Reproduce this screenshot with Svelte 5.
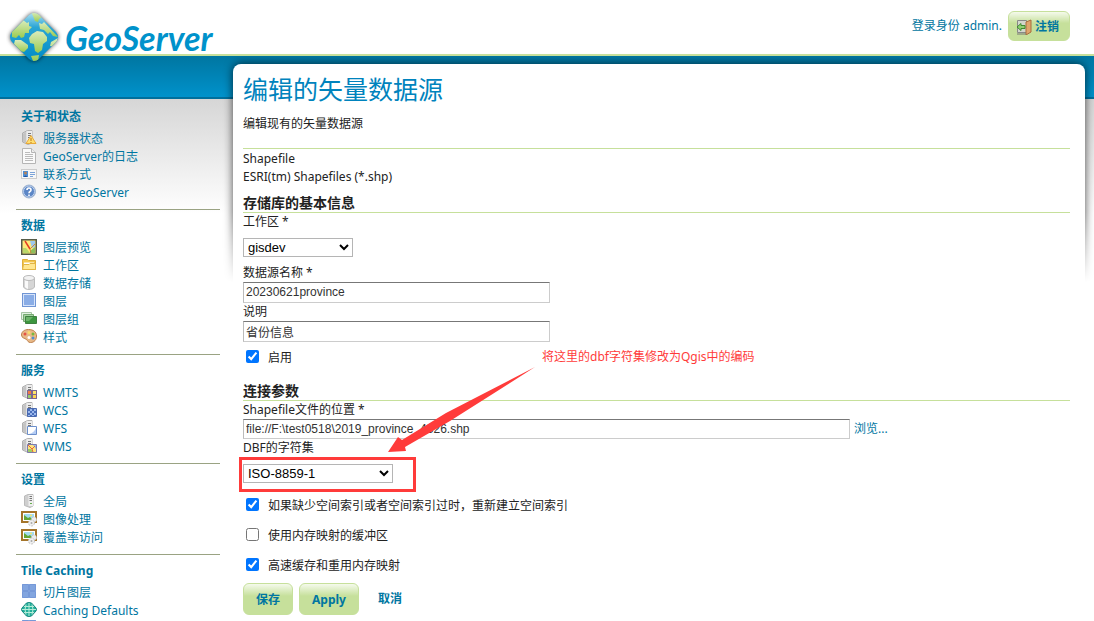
<script lang="ts">
	type Item = { icon: string; label: string };

	const sections: { title: string; items: Item[] }[] = [
		{
			title: '关于和状态',
			items: [
				{ icon: 'status', label: '服务器状态' },
				{ icon: 'log', label: 'GeoServer的日志' },
				{ icon: 'contact', label: '联系方式' },
				{ icon: 'help', label: '关于 GeoServer' }
			]
		},
		{
			title: '数据',
			items: [
				{ icon: 'preview', label: '图层预览' },
				{ icon: 'folder', label: '工作区' },
				{ icon: 'database', label: '数据存储' },
				{ icon: 'layer', label: '图层' },
				{ icon: 'layers', label: '图层组' },
				{ icon: 'palette', label: '样式' }
			]
		},
		{
			title: '服务',
			items: [
				{ icon: 'wmts', label: 'WMTS' },
				{ icon: 'wcs', label: 'WCS' },
				{ icon: 'wfs', label: 'WFS' },
				{ icon: 'wms', label: 'WMS' }
			]
		},
		{
			title: '设置',
			items: [
				{ icon: 'server', label: '全局' },
				{ icon: 'image', label: '图像处理' },
				{ icon: 'image', label: '覆盖率访问' }
			]
		},
		{
			title: 'Tile Caching',
			items: [
				{ icon: 'tiles', label: '切片图层' },
				{ icon: 'globe', label: 'Caching Defaults' },
				{ icon: 'tiles', label: '' }
			]
		}
	];

	let workspace = $state('gisdev');
	let storeName = $state('20230621province');
	let description = $state('省份信息');
	let enabled = $state(true);
	let location = $state('file://F:\\test0518\\2019_province_4326.shp');
	let charset = $state('ISO-8859-1');
	let spatialIndex = $state(true);
	let memoryMapped = $state(false);
	let cacheMaps = $state(true);
</script>

{#snippet tower()}
	<path d="M1.500 3 6.500.5H11v12.500L7 14.500 1.500 12z" fill="#d4d4d4" stroke="#b0b0b0" />
	<path d="M5.500 1H11v12H5.500z" fill="#ececec" />
	<path d="M7 3.500h3m-3 2h3m-3 2h3" stroke="#777" />
	<path d="M2 4 5 2v11l-3-1.500z" fill="#c4c4c4" />
{/snippet}

{#snippet icon(name: string)}
	<svg class="icon" viewBox="0 0 16 16" aria-hidden="true">
		{#if name === 'status'}
			{@render tower()}
			<path d="M10 5.500 15 13.500H5z" fill="#ffdf70" stroke="#e8a93a" stroke-linejoin="round" />
			<path d="M10 8v3m0 1v1" stroke="#b8751a" />
		{:else if name === 'log'}
			<path d="M1.500.5h9l4 4v11h-13z" fill="#fafafa" stroke="#b5b5b5" />
			<path d="M10.500.5v4h4" fill="#eee" stroke="#b5b5b5" />
			<path d="M4 4.500h5M4 6.500h8M4 8.500h8M4 10.500h8M4 12.500h8" stroke="#bbb" />
		{:else if name === 'contact'}
			<rect x=".5" y="3.500" width="15" height="9" fill="#f7f7f7" stroke="#ccc" />
			<rect x="2" y="5" width="5" height="6" fill="#4b8fd8" />
			<circle cx="4.500" cy="7" r="1.500" fill="#b5825a" />
			<path d="M2.500 11q2-3 4 0z" fill="#254f98" />
			<path d="M9 6.500h5m-5 2h5m-5 2h3" stroke="#7ba3d8" />
		{:else if name === 'help'}
			<circle cx="8" cy="7.500" r="6.500" fill="#5b86c6" stroke="#a3b6d0" />
			<circle cx="8" cy="7.500" r="5.500" fill="none" stroke="#bfd2ed" />
			<path d="M6 6q0-2 2-2t2 2q0 1-1 1.500T8 9.200M8 10.500v1.500" fill="none" stroke="#fff" stroke-width="1.600" />
		{:else if name === 'preview'}
			<rect x=".75" y=".75" width="14.500" height="14.500" fill="#ffe97a" stroke="#555b48" stroke-width="1.500" />
			<path d="M9 2h5v6l-3 1z" fill="#9cc8ee" />
			<path d="M2 9h3l4 5H2z" fill="#b9d86a" />
			<path d="m9 12 5-4v6H9z" fill="#8cc05c" />
			<path d="m4 2 5 8" fill="none" stroke="#e33c22" stroke-width="1.500" />
			<path d="m9 10 5-5M9 10l1 4" fill="none" stroke="#d08a3a" />
		{:else if name === 'folder'}
			<path d="M1.500 12.500v-10h5l1 1h7v9z" fill="#f3c84e" stroke="#dfae3c" />
			<path d="M3 5.500h10v2H3z" fill="#fff" />
			<path d="m1.500 12.500 1-5H8l1-1h5.500v6z" fill="#ffe791" stroke="#e2b544" />
		{:else if name === 'database'}
			<path d="M2.500 3v9q1 2.500 5.500 2.500t5.500-2.500V3z" fill="#d6d6d6" stroke="#bbb" />
			<path d="M4 5v7q1 1.500 3 2V6z" fill="#fafafa" />
			<ellipse cx="8" cy="3" rx="5.500" ry="2.500" fill="#f2f2f2" stroke="#bbb" />
		{:else if name === 'layer'}
			<rect x="1" y="0" width="14" height="14" fill="#7095d4" />
			<rect x="2.500" y="1.500" width="11" height="11" fill="#8aadE6" stroke="#d7e4fa" />
		{:else if name === 'layers'}
			<path d="M.5 1.500h10v7H.5z" fill="#e3f2e2" stroke="#a5c4a3" />
			<path d="M2.500 3.500h10v7h-10z" fill="#a6d3a2" stroke="#74a870" />
			<path d="M4.500 5.500h11v7h-11z" fill="#3c963f" stroke="#3f8041" />
			<path d="M5 6h7l-4 4H5z" fill="#6cb369" />
		{:else if name === 'palette'}
			<path d="M7.500.5C3 .5.500 3 .5 6s3 3 5 4.500c1.500 1.500 1.500 3 4 3 4 0 6-3 6-6.500 0-4-3-6.500-8-6.500z" fill="#e8b987" stroke="#bd7f4c" />
			<circle cx="4" cy="5" r="1.500" fill="#e65345" />
			<circle cx="8" cy="3.500" r="1.500" fill="#f9dc6a" />
			<circle cx="12" cy="5" r="1.500" fill="#77b93e" />
			<circle cx="12" cy="9" r="1.500" fill="#538dd0" />
			<circle cx="8" cy="8.500" r="1.500" fill="#fff" />
		{:else if name === 'wmts'}
			{@render tower()}
			<path d="M6 6h10v9H6z" fill="#7d6790" />
			<path d="M7 7h3v3H7z" fill="#f27946" /><path d="M12 7h3v3h-3z" fill="#ffe568" />
			<path d="M7 11h3v3H7z" fill="#95cb6a" /><path d="M12 11h3v3h-3z" fill="#ffd24d" />
		{:else if name === 'wcs'}
			{@render tower()}
			<path d="M6.500 6.500h9v8h-9z" fill="#9cb8ec" stroke="#4a69af" />
			<path d="M7 7h2v2h2V7h2v2h2v2h-2v2h2v1h-2v-1h-2v1H9v-1H7v-2h2V9H7zm4 2v2H9v2h2v-2h2V9z" fill="#4a6fbb" />
		{:else if name === 'wfs'}
			{@render tower()}
			<path d="M6.500 6.500h9v8h-9z" fill="#fff" stroke="#6c8fcb" />
			<path d="M15 8v6H8q5-1 7-6z" fill="#b5cdf4" />
		{:else if name === 'wms'}
			{@render tower()}
			<path d="M6.500 6.500h9v8h-9z" fill="#ffe67c" stroke="#807bac" />
			<path d="M12 7h3v4z" fill="#93bbe8" /><path d="M7 11h3l2 3H7z" fill="#9ccc66" />
			<path d="m7 7 4 4 1 3m-1-3 3-3" fill="none" stroke="#e8643a" />
		{:else if name === 'server'}
			<path d="M3.500 3 7 1.500h5V13l-3 1.500-5.500-2z" fill="#cfcfcf" stroke="#bbb" />
			<path d="M7.500 2H12v11H7.500z" fill="#efefef" />
			<path d="M8.500 3.500H11m-2.500 2H11m-2.500 2H11" stroke="#777" />
			<path d="M9 10h2v1H9z" fill="#66b24c" />
		{:else if name === 'image'}
			<path d="M1 1h14v10H1z" fill="#fff" stroke="#a5752a" stroke-width="2" />
			<path d="M3 3h10v6H3z" fill="#a2dcf0" />
			<path d="m3 9 0-5 4 3 2-1 3 3z" fill="#64a635" />
			<circle cx="10" cy="4.500" r="1" fill="#ffe667" />
			<circle cx="13" cy="8.500" r="2.500" fill="#ececec" stroke="#c2c2c2" stroke-dasharray="2 1" />
			<circle cx="10.500" cy="12" r="3" fill="#efefef" stroke="#c2c2c2" stroke-dasharray="2 1" />
			<circle cx="10.500" cy="12" r="1" fill="#aaa" />
		{:else if name === 'tiles'}
			<path d="M1 0h14v14H1z" fill="#a5c0ee" />
			<path d="M1.500.5h6v6h-6zm7 0h6v6h-6zm-7 7h6v6h-6zm7 0h6v6h-6z" fill="#82a5df" stroke="#7699d8" />
		{:else if name === 'globe'}
			<path d="M8 .5 10.500 1 15 6l.5 1.500L15 9l-4.500 5-2.500.500L5.500 14 1 9 .5 7.500 1 6l4.500-5z" fill="#23ae9a" stroke="#16877f" stroke-linejoin="round" />
			<path d="M8 1v13M1 7.500h14M3 4.500h10M3 10.500h10M5 2.500q-2 5 0 10M11 2.500q2 5 0 10" fill="none" stroke="#b5ecd8" />
		{/if}
	</svg>
{/snippet}

<div class="page">
	<header class="header">
		<a class="logo" href="/geoserver/web" aria-label="GeoServer">
			<svg class="logo-mark" viewBox="0 0 56 56" aria-hidden="true">
				<defs>
					<linearGradient id="sea" x1="0" y1="0" x2="0" y2="1">
						<stop offset="0" stop-color="#a8def0" />
						<stop offset=".3" stop-color="#2aa5d5" />
						<stop offset="1" stop-color="#008bc6" />
					</linearGradient>
					<linearGradient id="land" x1="0" y1="0" x2="0" y2="1">
						<stop offset="0" stop-color="#d9ecbd" />
						<stop offset="1" stop-color="#9ccb4f" />
					</linearGradient>
					<clipPath id="diamond">
						<path d="M23 6q5-4 10 0l17 17q4 5 0 10L33 50q-5 4-10 0L6 33q-4-5 0-10z" />
					</clipPath>
				</defs>
				<path class="logo-shape" d="M23 6q5-4 10 0l17 17q4 5 0 10L33 50q-5 4-10 0L6 33q-4-5 0-10z" fill="url(#sea)" />
				<g clip-path="url(#diamond)" fill="url(#land)">
					<path d="M6 22 17 11l4 3 2-1 0 4 3 1-3 3 0 3-4 0-1 4-3 1-2-3-3 3-4-1z" />
					<path d="m9 31 6 0 7 5 0 3-4 4-4-1-6-7z" />
					<path d="m25 3 8 0 3 5-3 2-1 3-3-1-2-5z" />
					<path d="m33 14 3 1 2-2 14 15-5-1-3-4-2 2-4-4-4-1z" />
					<path d="m26 25 5-3 6 1 4 5 0 4-4 3-1 6-4 3-3-2-1-7-4-1-1-5z" />
					<path d="m45 33 7-4-3 9-5-1zM25 47l8-1-1 6-5 0z" />
				</g>
			</svg>
			<span class="logo-text">GeoServer</span>
		</a>
		<div class="login">
			<span>登录身份 admin.</span>
			<button class="btn logout" type="button">
				<svg class="icon" viewBox="0 0 16 16" aria-hidden="true">
					<path d="M1.500 1.500h9v12h-9z" fill="#d2d6cc" stroke="#888" />
					<path d="m10 3 5-2v12l-5 3z" fill="#dfa56c" stroke="#a86c3c" />
					<path d="M1 8 5 4.500v2h4v3H5v2z" fill="#8fcf74" stroke="#3f8a30" />
					<path d="M1 15h9" stroke="#777" />
				</svg>
				注销
			</button>
		</div>
	</header>

	<div class="body">
		<nav class="sidebar">
			{#each sections as section}
				<section class="group">
					<h3>{section.title}</h3>
					<ul>
						{#each section.items as item}
							<li>
								<a href="#{item.icon}">
									{@render icon(item.icon)}
									<span>{item.label}</span>
								</a>
							</li>
						{/each}
					</ul>
				</section>
			{/each}
		</nav>

		<main class="main">
			<div class="shadow"></div>
			<div class="content">
				<h1>编辑的矢量数据源</h1>
				<p class="lead">编辑现有的矢量数据源</p>

				<form onsubmit={(e) => e.preventDefault()}>
					<div class="type">
						<div>Shapefile</div>
						<div>ESRI(tm) Shapefiles (*.shp)</div>
					</div>

					<h2>存储库的基本信息</h2>
					<label for="workspace">工作区 *</label>
					<select id="workspace" class="workspace" bind:value={workspace}>
						<option>gisdev</option>
					</select>
					<label for="name">数据源名称 *</label>
					<input id="name" class="text" type="text" bind:value={storeName} />
					<label for="description">说明</label>
					<input id="description" class="text" type="text" bind:value={description} />
					<label class="check"><input type="checkbox" bind:checked={enabled} /><span>启用</span></label>

					<h2 class="params">连接参数</h2>
					<label for="location">Shapefile文件的位置 *</label>
					<div class="file-row">
						<input id="location" class="text" type="text" bind:value={location} />
						<a href="#browse">浏览...</a>
					</div>
					<label for="charset">DBF的字符集</label>
					<div class="marked">
						<select id="charset" class="charset" bind:value={charset}>
							<option>ISO-8859-1</option>
						</select>
						<div class="mark-box"></div>
						<svg class="mark-arrow" viewBox="0 0 148 88" aria-hidden="true">
							<path d="M147 0 62 54 17 80l1 4-18 1 10-15 4 3L58 46z" fill="#ff3b3a" />
						</svg>
						<div class="mark-note">将这里的dbf字符集修改为Qgis中的编码</div>
					</div>
					<label class="check"><input type="checkbox" bind:checked={spatialIndex} /><span>如果缺少空间索引或者空间索引过时，重新建立空间索引</span></label>
					<label class="check spaced"><input type="checkbox" bind:checked={memoryMapped} /><span>使用内存映射的缓冲区</span></label>
					<label class="check spaced"><input type="checkbox" bind:checked={cacheMaps} /><span>高速缓存和重用内存映射</span></label>

					<div class="actions">
						<button class="btn" type="submit">保存</button>
						<button class="btn" type="button">Apply</button>
						<a class="cancel" href="#cancel">取消</a>
					</div>
				</form>
			</div>
		</main>
	</div>
</div>

<style>
	:global(body) {
		margin: 0;
		background: #fff;
	}

	.page {
		height: 100vh;
		overflow: hidden;
		font: 12px/18px 'Noto Sans', 'Noto Sans CJK SC', sans-serif;
		color: #222;
	}

	h1,
	h2,
	h3,
	p,
	ul {
		margin: 0;
		padding: 0;
	}

	a {
		color: #0076a1;
		text-decoration: none;
	}

	/* Header */
	.header {
		position: relative;
		z-index: 2;
		display: flex;
		justify-content: space-between;
		height: 54px;
		border-bottom: 2px solid #c6e09b;
	}

	.logo {
		display: flex;
		align-items: flex-start;
		gap: 3px;
		padding: 9px 0 0 6px;
	}

	.logo-mark {
		width: 56px;
		height: 56px;
	}

	.logo-shape {
		filter: drop-shadow(0 0 2px rgba(0, 0, 0, 0.7));
	}

	.logo-text {
		padding-top: 9px;
		font: italic 700 34px/40px Lato, sans-serif;
		color: #0092cb;
	}

	.login {
		display: flex;
		align-items: center;
		gap: 6px;
		padding: 0 24px 2px 0;
		color: #0076a1;
	}

	.icon {
		flex: none;
		width: 16px;
		height: 16px;
	}

	.btn {
		height: 32px;
		padding: 1px 12px 0;
		border: 1px solid #c6e09b;
		border-radius: 6px;
		background: linear-gradient(#f5faec 0, #c6e09b 40%);
		font: 700 12px/18px 'Noto Sans', 'Noto Sans CJK SC', sans-serif;
		color: #0076a1;
		cursor: pointer;
	}

	.logout {
		display: flex;
		align-items: center;
		gap: 3px;
		height: 30px;
		padding: 1px 10px 0 7px;
	}

	/* Blue band with the gray fade under it */
	.body {
		display: flex;
		gap: 13px;
		padding: 8px 9px 0 16px;
		background:
			linear-gradient(#0076a1, #0092cb) 0 0 / 100% 41px no-repeat,
			linear-gradient(#006f9c, #006f9c) 0 41px / 100% 2px no-repeat,
			linear-gradient(#d6d6d6, #fff) 0 43px / 100% 115px no-repeat;
	}

	.sidebar {
		flex: none;
		width: 204px;
		padding-top: 37px;
	}

	.group {
		padding: 7px 5px 7px;
	}

	.group + .group {
		border-top: 1px solid #9aa383;
	}

	.group h3 {
		margin-bottom: 4px;
		font-size: 12px;
		line-height: 18px;
		color: #0076a1;
	}

	.group ul {
		list-style: none;
	}

	.group a {
		display: flex;
		gap: 6px;
		height: 18px;
	}

	/* Main panel */
	.main {
		position: relative;
		flex: 1;
		min-width: 0;
	}

	.shadow {
		position: absolute;
		inset: -12px -12px auto;
		height: 230px;
		overflow: hidden;
		mask-image: linear-gradient(#000 70%, transparent);
	}

	.shadow::before {
		content: '';
		position: absolute;
		inset: 12px 12px -20px;
		border-radius: 8px;
		box-shadow: 0 0 10px rgba(0, 0, 0, 0.7);
	}

	.content {
		position: relative;
		padding: 8px 15px 16px 10px;
		border-radius: 8px;
		background: #fff;
	}

	h1 {
		font-size: 25px;
		font-weight: 400;
		line-height: 34px;
		color: #0083bd;
	}

	.lead {
		margin: 9px 0 15px;
	}

	.type {
		padding-top: 1px;
		border-top: 1px solid #c6e09b;
	}

	h2 {
		margin-top: 8px;
		border-bottom: 1px solid #c6e09b;
		font-size: 14px;
		line-height: 18px;
	}

	.params {
		margin-top: 16px;
	}

	label {
		display: block;
	}

	select {
		display: block;
		height: 19px;
		margin: 7px 0;
		padding: 0;
		border: 1px solid #b5b5b5;
		border-radius: 0;
		background: #fff;
		font: 13px/17px 'Liberation Sans', Arial, sans-serif;
		color: #000;
	}

	.workspace {
		width: 110px;
	}

	.charset {
		width: 150px;
	}

	.text {
		display: block;
		box-sizing: border-box;
		width: 307px;
		height: 21px;
		padding: 0 3px 1px 2px;
		border: 1px solid #ccc;
		border-top-color: #777;
		border-left-color: #bbb;
		background: #fff;
		font: 12px/18px 'Liberation Sans', 'Noto Sans CJK SC', sans-serif;
		color: #333;
	}

	.file-row {
		display: flex;
		align-items: center;
		gap: 4px;
		height: 20px;
	}

	.file-row .text {
		width: 607px;
		height: 20px;
	}

	.check {
		display: flex;
		align-items: flex-start;
		gap: 9px;
		height: 18px;
		margin-top: 6px;
		padding-left: 3px;
	}

	.check input {
		width: 13px;
		height: 13px;
		margin: 2px 0 0;
	}

	.check span {
		padding-top: 1px;
	}

	.spaced {
		margin-top: 12px;
	}

	.actions {
		display: flex;
		align-items: center;
		gap: 6px;
		margin-top: 9px;
	}

	.cancel {
		margin-left: 13px;
		font-weight: 700;
	}

	/* Red annotation over the charset field */
	.marked {
		position: relative;
		display: flow-root;
	}

	.mark-box {
		position: absolute;
		top: 0;
		left: -4px;
		box-sizing: border-box;
		width: 177px;
		height: 35px;
		border: 3px solid #ff3b3a;
		pointer-events: none;
	}

	.mark-arrow {
		position: absolute;
		top: -90px;
		left: 145px;
		width: 148px;
		height: 88px;
		pointer-events: none;
	}

	.mark-note {
		position: absolute;
		top: -109px;
		left: 299px;
		color: #ff3b3a;
		white-space: nowrap;
	}
</style>
